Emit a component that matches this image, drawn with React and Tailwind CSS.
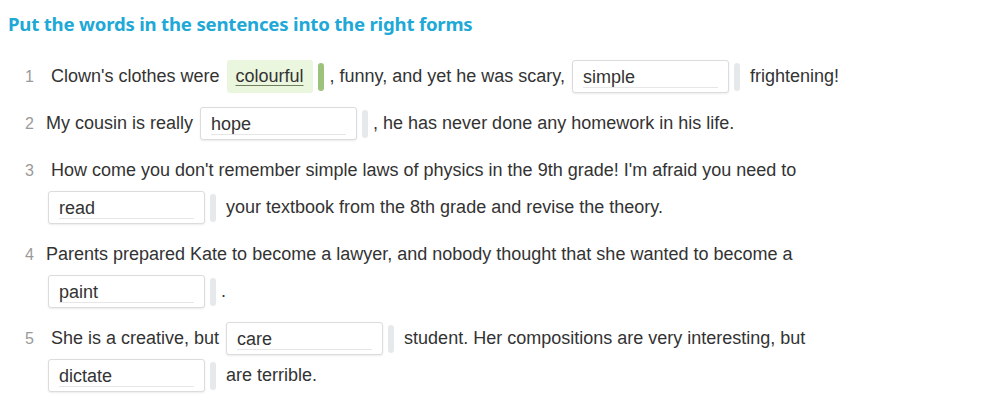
import React from "react";

function Box({ value }) {
  return (
    <span className="ml-[2px] mr-[5px] inline-flex h-[33px] w-[157px] shrink-0 items-center rounded-[3px] border border-[#dcdcdc] bg-white pl-[10px] shadow-[0_1px_2px_rgba(0,0,0,0.08)]">
      <span className="flex h-[22px] w-[135px] items-end border-b border-[#e6e6e6] leading-[20px] text-[#333]">
        {value}
      </span>
    </span>
  );
}

function Bar({ green }) {
  return (
    <span
      className={
        green
          ? "mr-[6px] inline-block h-[28px] w-[6px] shrink-0 rounded-[3px] bg-[#9cc27c]"
          : "mr-[5px] inline-block h-[28px] w-[6px] shrink-0 rounded-[3px] bg-[#e6e9ec]"
      }
    />
  );
}

function Correct({ value }) {
  return (
    <span className="ml-[2px] mr-[5px] inline-flex h-[33px] shrink-0 items-center rounded-[3px] bg-[#ebf6df] px-[9px]">
      <span className="underline decoration-[#6f7f5c] underline-offset-[3px]">{value}</span>
    </span>
  );
}

function T({ children }) {
  return <span className="whitespace-pre">{children}</span>;
}

function Line({ children }) {
  return <div className="flex h-[37px] items-center whitespace-nowrap">{children}</div>;
}

function Row({ n, children }) {
  return (
    <div className="flex">
      <div className="flex h-[37px] w-[34px] items-center justify-end text-[16px] text-[#9a9a9a]">{n}</div>
      <div className="ml-[12px]">{children}</div>
    </div>
  );
}

export default function App() {
  return (
    <div
      className="h-[403px] w-[983px] bg-white text-[18px] text-[#333]"
      style={{ fontFamily: '"Liberation Sans", Arial, sans-serif' }}
    >
      <div className="pl-[8px] pt-[11px]">
        <h1
          className="text-[18.6px] font-bold leading-[26px] tracking-[-0.2px] text-[#20a8d7]"
          style={{ fontFamily: '"Noto Sans", sans-serif' }}
        >
          Put the words in the sentences into the right forms
        </h1>
      </div>
      <div className="mt-[21px] flex flex-col gap-[10px]">
        <Row n="1">
          <Line>
            <T>{" Clown's clothes were "}</T>
            <Correct value="colourful" />
            <Bar green />
            <T>{", funny, and yet he was scary, "}</T>
            <Box value="simple" />
            <Bar />
            <T>{" frightening!"}</T>
          </Line>
        </Row>
        <Row n="2">
          <Line>
            <T>{"My cousin is really "}</T>
            <Box value="hope" />
            <Bar />
            <T>{", he has never done any homework in his life."}</T>
          </Line>
        </Row>
        <Row n="3">
          <Line>
            <T>{" How come you don't remember simple laws of physics in the 9th grade! I'm afraid you need to"}</T>
          </Line>
          <Line>
            <Box value="read" />
            <Bar />
            <T>{" your textbook from the 8th grade and revise the theory."}</T>
          </Line>
        </Row>
        <Row n="4">
          <Line>
            <T>{"Parents prepared Kate to become a lawyer, and nobody thought that she wanted to become a"}</T>
          </Line>
          <Line>
            <Box value="paint" />
            <Bar />
            <T>{"."}</T>
          </Line>
        </Row>
        <Row n="5">
          <Line>
            <T>{" She is a creative, but "}</T>
            <Box value="care" />
            <Bar />
            <T>{" student. Her compositions are very interesting, but"}</T>
          </Line>
          <Line>
            <Box value="dictate" />
            <Bar />
            <T>{" are terrible."}</T>
          </Line>
        </Row>
      </div>
    </div>
  );
}
